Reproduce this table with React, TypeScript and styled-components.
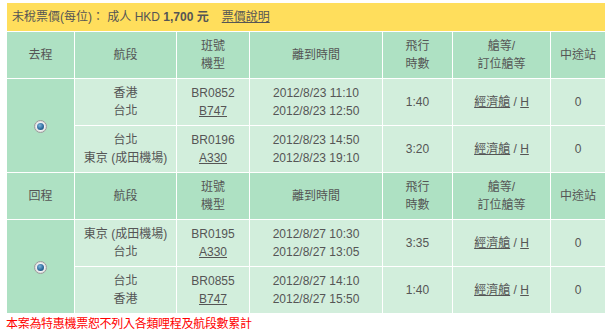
import React from "react";
import styled, { createGlobalStyle } from "styled-components";

const Global = createGlobalStyle`
  html, body { margin: 0; padding: 0; background: #fff; }
  body {
    font-family: "Liberation Sans", Arial, "Noto Sans CJK TC", sans-serif;
    font-size: 12px;
    color: #555;
  }
`;

const Wrap = styled.div`
  padding: 3px 0 0 7px;
  width: 598px;
`;

const PriceBar = styled.div`
  height: 28px;
  line-height: 28px;
  background: #ffde5c;
  padding-left: 5px;
  font-size: 12px;
  color: #555;
  white-space: nowrap;
`;

const Strong = styled.b`
  font-weight: bold;
`;

const Link = styled.a<{ $gap?: number }>`
  color: #555;
  text-decoration: underline;
  cursor: pointer;
  margin-left: ${(p) => (p.$gap ? `${p.$gap}px` : "0")};
`;

const Table = styled.table`
  border-collapse: separate;
  border-spacing: 1px;
  table-layout: fixed;
  width: 600px;
  margin-left: -1px;
  background: #fff;
`;

const Row = styled.tr`
  height: 46px;
`;

const Cell = styled.td<{ $head?: boolean }>`
  padding: 0;
  text-align: center;
  vertical-align: middle;
  line-height: 18px;
  background: ${(p) => (p.$head ? "#aee1c3" : "#d2eedc")};
  color: #555;
  font-size: 12px;
`;

const Radio = styled.span`
  display: inline-block;
  width: 11px;
  height: 11px;
  border-radius: 50%;
  border: 1px solid #9a9a9a;
  background: #f4f4f4;
  position: relative;
  vertical-align: middle;
  box-shadow: inset 0 0 0 1px #e0e0e0;
  &::after {
    content: "";
    position: absolute;
    left: 2px;
    top: 2px;
    width: 7px;
    height: 7px;
    border-radius: 50%;
    background: radial-gradient(circle at 40% 35%, #7fb4dc 0%, #2f6d9e 55%, #163f63 100%);
  }
`;

const Footer = styled.div`
  color: #f00;
  font-size: 12px;
  line-height: 18px;
  margin-left: -1px;
  letter-spacing: -0.3px;
  font-family: "Noto Sans CJK TC", sans-serif;
`;

type Seg = {
  from: string;
  to: string;
  flight: string;
  plane: string;
  dep: string;
  arr: string;
  dur: string;
};

const outbound: Seg[] = [
  { from: "香港", to: "台北", flight: "BR0852", plane: "B747", dep: "2012/8/23 11:10", arr: "2012/8/23 12:50", dur: "1:40" },
  { from: "台北", to: "東京 (成田機場)", flight: "BR0196", plane: "A330", dep: "2012/8/23 14:50", arr: "2012/8/23 19:10", dur: "3:20" },
];

const inbound: Seg[] = [
  { from: "東京 (成田機場)", to: "台北", flight: "BR0195", plane: "A330", dep: "2012/8/27 10:30", arr: "2012/8/27 13:05", dur: "3:35" },
  { from: "台北", to: "香港", flight: "BR0855", plane: "B747", dep: "2012/8/27 14:10", arr: "2012/8/27 15:50", dur: "1:40" },
];

const HeadRow = ({ label }: { label: string }) => (
  <Row>
    <Cell $head>{label}</Cell>
    <Cell $head>航段</Cell>
    <Cell $head>班號<br />機型</Cell>
    <Cell $head>離到時間</Cell>
    <Cell $head>飛行<br />時數</Cell>
    <Cell $head>艙等/<br />訂位艙等</Cell>
    <Cell $head>中途站</Cell>
  </Row>
);

const Leg = ({ segs, label }: { segs: Seg[]; label: string }) => (
  <>
    <HeadRow label={label} />
    {segs.map((s, i) => (
      <Row key={i}>
        {i === 0 && (
          <Cell $head rowSpan={segs.length}>
            <Radio />
          </Cell>
        )}
        <Cell>{s.from}<br />{s.to}</Cell>
        <Cell>{s.flight}<br /><Link>{s.plane}</Link></Cell>
        <Cell>{s.dep}<br />{s.arr}</Cell>
        <Cell>{s.dur}</Cell>
        <Cell><Link>經濟艙</Link> / <Link>H</Link></Cell>
        <Cell>0</Cell>
      </Row>
    ))}
  </>
);

export default function App() {
  return (
    <>
      <Global />
      <Wrap>
        <PriceBar>
          未稅票價(每位)： 成人 HKD <Strong>1,700 元</Strong>
          <Link $gap={13}>票價說明</Link>
        </PriceBar>
        <Table>
          <colgroup>
            <col style={{ width: 67 }} />
            <col style={{ width: 101 }} />
            <col style={{ width: 72 }} />
            <col style={{ width: 132 }} />
            <col style={{ width: 69 }} />
            <col style={{ width: 97 }} />
            <col style={{ width: 54 }} />
          </colgroup>
          <tbody>
            <Leg segs={outbound} label="去程" />
            <Leg segs={inbound} label="回程" />
          </tbody>
        </Table>
        <Footer>本案為特惠機票恕不列入各類哩程及航段數累計</Footer>
      </Wrap>
    </>
  );
}
